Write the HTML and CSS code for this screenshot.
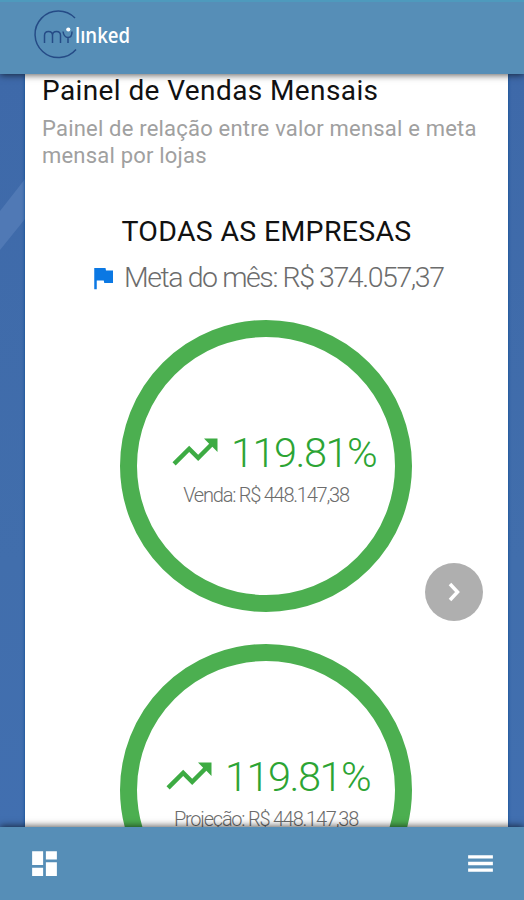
FILE: index.html
```html
<!DOCTYPE html>
<html lang="pt-BR">
<head>
<meta charset="utf-8">
<title>mylinked</title>
<link rel="stylesheet" href="styles.css">
</head>
<body>
<div class="app">
  <header class="topbar">
    <svg class="logo" width="104" height="54" viewBox="0 0 104 54" role="img" aria-label="mylinked">
      <path d="M42 9A23.300 23.300 0 1 0 43 40.500" fill="none" stroke="#254b86" stroke-width="1.500"/>
      <g fill="none" stroke="#254b86" stroke-width="1.500">
        <path d="M11.500 34V26.500Q11.500 22.500 15.500 22.500T19.500 26.500V34M19.500 26.500Q19.500 22.500 23.500 22.500T27.500 26.500V34"/>
        <path d="M30 22.500Q31 28.500 35 28.500T39 22.500M35 28.500V34"/>
      </g>
      <circle cx="35.300" cy="20.500" r="2.100" fill="#fff"/>
      <text class="logo-linked" x="42" y="34" textLength="55" lengthAdjust="spacingAndGlyphs">lınked</text>
    </svg>
  </header>
  <main class="content">
    <svg class="stripe" width="25" height="76" viewBox="0 0 25 76"><path d="M0 35 25 3V43L0 74Z"/></svg>
    <section class="card">
      <h1 class="title">Painel de Vendas Mensais</h1>
      <p class="subtitle">Painel de relação entre valor mensal e meta<br>mensal por lojas</p>
      <h2 class="company">TODAS AS EMPRESAS</h2>
      <div class="goal">
        <svg class="flag" width="30" height="30" viewBox="0 0 24 24"><path d="M14.400 6 14 4H5v17h2v-7h5.600l.4 2h7V6z"/></svg>
        <span class="goal-text">Meta do mês: R$ 374.057,37</span>
      </div>
      <div class="ring">
        <div class="rate">
          <svg class="trend" width="54" height="54" viewBox="0 0 24 24"><path d="M16 6l2.290 2.290-4.880 4.880-4-4L2 16.590 3.410 18l6-6 4 4 6.300-6.290L22 12V6z"/></svg>
          <span class="percent">119.81%</span>
        </div>
        <p class="amount">Venda: R$ 448.147,38</p>
      </div>
      <div class="ring ring-projection">
        <div class="rate">
          <svg class="trend" width="54" height="54" viewBox="0 0 24 24"><path d="M16 6l2.290 2.290-4.880 4.880-4-4L2 16.590 3.410 18l6-6 4 4 6.300-6.290L22 12V6z"/></svg>
          <span class="percent">119.81%</span>
        </div>
        <p class="amount">Projeção: R$ 448.147,38</p>
      </div>
      <button class="next" aria-label="Próximo"><svg width="58" height="58" viewBox="0 0 58 58"><path d="M25 21 32.500 29 25 37"/></svg></button>
    </section>
  </main>
  <footer class="bottombar">
    <svg class="dashboard" width="33" height="33" viewBox="0 0 24 24"><path d="M3 13h8V3H3v10zm0 8h8v-6H3v6zm10 0h8V11h-8v10zm0-18v6h8V3h-8z"/></svg>
    <svg class="menu" width="33" height="33" viewBox="0 0 24 24"><path d="M3 18h18v-2.400H3zm0-4.800h18v-2.400H3zm0-7.200v2.400h18V6H3z"/></svg>
  </footer>
</div>
</body>
</html>
```
FILE: styles.css
```css
* { box-sizing: border-box; margin: 0; padding: 0; }
body { font-family: Roboto, sans-serif; overflow: hidden; }
.app { width: 524px; height: 900px; display: flex; flex-direction: column; overflow: hidden; }
.topbar, .bottombar { position: relative; z-index: 2; flex: none; background: #568eb7; }
.topbar { height: 74px; padding: 7px 0 0 33px; border-top: 2px solid #4e9abd; box-shadow: 0 1px 7px rgba(0, 0, 0, .65); }
.logo { display: block; overflow: visible; }
.logo-linked { font: 600 22px "Open Sans", sans-serif; fill: #fff; }
.content { position: relative; flex: 1; min-height: 0; overflow: hidden; padding: 0 16px 0 25px; background: linear-gradient(#3e69a9, #416eac 65%, #416fb0); }
.stripe { position: absolute; left: 0; top: 102px; fill: #5079b5; }
.card { position: relative; height: 100%; overflow: hidden; background: #fff; box-shadow: 0 0 3px #07498e; display: flex; flex-direction: column; }
.title { padding-left: 17px; padding-top: 1px; font-size: 28px; line-height: 32px; font-weight: 400; letter-spacing: .4px; color: #111; white-space: nowrap; }
.subtitle { margin-top: 8px; padding-left: 17px; font-size: 22px; line-height: 27px; letter-spacing: .2px; color: #a0a0a0; white-space: nowrap; }
.company { margin-top: 47px; text-align: center; font-size: 28.500px; line-height: 32px; font-weight: 450; letter-spacing: .3px; color: #111; white-space: nowrap; }
.goal { display: flex; align-items: center; height: 32px; margin-top: 13px; padding-left: 63px; }
.flag { flex: none; fill: #0b78e3; position: relative; top: 1px; }
.goal-text { margin-left: 6px; font-size: 28.500px; font-weight: 350; letter-spacing: -1.420px; color: #6c6c6c; white-space: nowrap; }
.ring { flex: none; width: 292px; height: 292px; margin: 27px 0 0 95px; padding-top: 88px; border: 17px solid #4caf50; border-radius: 50%; }
.ring-projection { margin-top: 32px; }
.rate { display: flex; align-items: center; height: 54px; padding-left: 31px; }
.ring-projection .rate { padding-left: 25px; }
.trend { flex: none; fill: #3dab43; }
.percent { margin-left: 9px; font-size: 41.500px; font-weight: 350; letter-spacing: -1.500px; color: #2ca434; white-space: nowrap; }
.amount { margin-top: 3px; text-align: center; font-size: 20px; line-height: 26px; font-weight: 350; letter-spacing: -1.230px; color: #6c6c6c; white-space: nowrap; }
.next { position: absolute; left: 400px; top: 489px; width: 58px; height: 58px; border: 0; border-radius: 50%; background: #afafaf; }
.next svg { display: block; fill: none; stroke: #fff; stroke-width: 3.500px; }
.bottombar { height: 73px; display: flex; align-items: center; justify-content: space-between; padding: 0 27px 0 28px; box-shadow: 0 -1px 7px rgba(0, 0, 0, .65); }
.bottombar svg { fill: #fff; }
```
